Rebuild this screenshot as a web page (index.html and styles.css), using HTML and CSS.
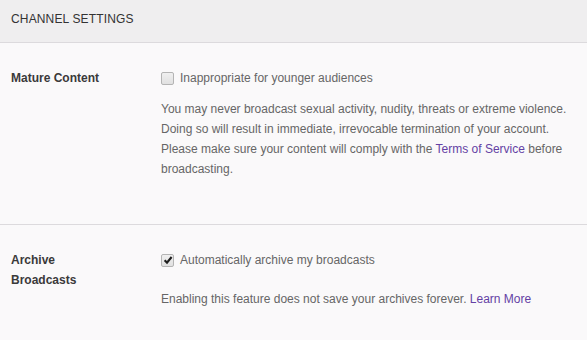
FILE: index.html
```html
<!DOCTYPE html>
<html>
<head>
<meta charset="utf-8">
<link rel="stylesheet" href="styles.css">
</head>
<body>
<div class="page">
  <div class="header">CHANNEL SETTINGS</div>
  <div class="section section-first">
    <div class="label">Mature Content</div>
    <div class="content">
      <div class="check-row">
        <span class="checkbox"></span>
        <span>Inappropriate for younger audiences</span>
      </div>
      <p class="desc desc-tight">You may never broadcast sexual activity, nudity, threats or extreme violence. Doing so will result in immediate, irrevocable termination of your account. Please make sure your content will comply with the <a class="link" href="#">Terms of Service</a> before broadcasting.</p>
    </div>
  </div>
  <div class="section">
    <div class="label">Archive<br>Broadcasts</div>
    <div class="content">
      <div class="check-row">
        <span class="checkbox checked"><svg viewBox="0 0 10 10" width="10" height="10"><path d="M1.6 5.2 L4 7.6 L8.6 2" fill="none" stroke="#1e1e1e" stroke-width="2.1"/></svg></span>
        <span>Automatically archive my broadcasts</span>
      </div>
      <p class="desc desc-loose">Enabling this feature does not save your archives forever. <a class="link" href="#">Learn More</a></p>
    </div>
  </div>
</div>
</body>
</html>
```

FILE: styles.css
```css
html, body {
  margin: 0;
  padding: 0;
  background: #faf9fa;
}
.page {
  width: 587px;
  height: 340px;
  overflow: hidden;
  font-family: "Liberation Sans", Arial, sans-serif;
  font-size: 12px;
  line-height: 20px;
  color: #666666;
}
.header {
  height: 33px;
  padding: 9px 11px 0;
  background: #efeeef;
  border-bottom: 1px solid #dcdadd;
  color: #333333;
  letter-spacing: 0.15px;
}
.section {
  display: grid;
  grid-template-columns: 150px 1fr;
  padding: 25px 11px 0;
}
.section-first {
  padding-bottom: 45px;
  border-bottom: 1px solid #dcdadd;
}
.label {
  font-weight: bold;
  color: #3a3a3a;
}
.check-row {
  display: flex;
  align-items: center;
  gap: 6px;
}
.checkbox {
  width: 11px;
  height: 11px;
  border: 1px solid #b4b4b4;
  border-radius: 2px;
  background: linear-gradient(#f0f0f0, #e0e0e0);
  display: flex;
  align-items: center;
  justify-content: center;
}
.desc {
  margin: 0;
}
.desc-tight {
  margin-top: 11px;
}
.desc-loose {
  margin-top: 19px;
}
.link {
  color: #6441a4;
  text-decoration: none;
}
```
